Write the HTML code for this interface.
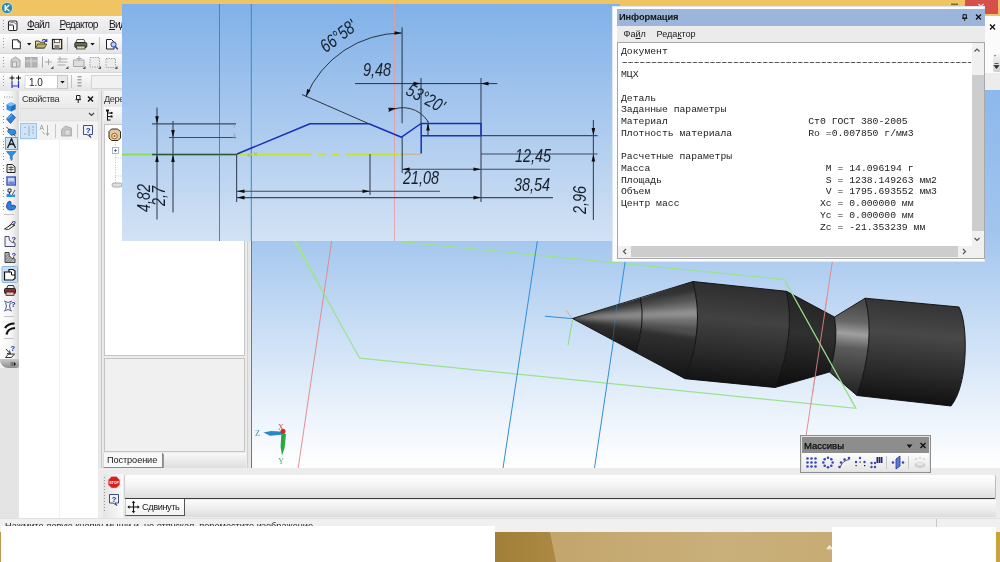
<!DOCTYPE html>
<html lang="ru">
<head>
<meta charset="utf-8">
<title>КОМПАС-3D</title>
<style>
html,body{margin:0;padding:0;}
body{width:1000px;height:562px;overflow:hidden;position:relative;background:#f0f0f0;font-family:"Liberation Sans","DejaVu Sans",sans-serif;font-size:9px;color:#1a1a1a;}
.a{position:absolute;}
.t{position:absolute;white-space:nowrap;line-height:1;}
#title{left:0;top:0;width:1000px;height:16px;background:#f0c462;}
#closebtn{left:965px;top:0;width:33px;height:14px;background:#d5504b;}
#menubar{left:0;top:16px;width:1000px;height:18px;background:linear-gradient(#f4f4f6,#e6e6ea);}
#tb1{left:0;top:34px;width:1000px;height:19px;background:linear-gradient(#fdfdfd,#e4e4e6);border-top:1px solid #fff;box-sizing:border-box;}
#tb2{left:0;top:53px;width:1000px;height:19px;background:linear-gradient(#fdfdfd,#e4e4e6);border-top:1px solid #d8d8d8;box-sizing:border-box;}
#tb3{left:0;top:72px;width:1000px;height:19px;background:linear-gradient(#fdfdfd,#e4e4e6);border-top:1px solid #d8d8d8;box-sizing:border-box;}
#ltool{left:0;top:91px;width:19px;height:277px;background:linear-gradient(90deg,#ffffff,#f4f4f4 60%,#d8d8d8);border-radius:0 0 0 6px;}
#ltoolcap{left:0;top:359px;width:19px;height:9px;background:linear-gradient(#c8c8c8,#8e8e8e);border-radius:0 0 3px 8px;}
#lbelow{left:0;top:368px;width:19px;height:150px;background:#e4e4e4;}
#props{left:19px;top:91px;width:79px;height:427px;background:#fff;}
#propshead{left:19px;top:91px;width:79px;height:17px;background:linear-gradient(#f6f6f6,#e9e9e9);}
#divider{left:98px;top:91px;width:6px;height:427px;background:#e9e9e9;}
#treepanel{left:104px;top:91px;width:147px;height:384px;background:#ececec;}
#view{left:252px;top:90px;width:748px;height:378px;background:linear-gradient(#8cb8ec 0%,#a2c5ee 38%,#bdd6f3 55%,#e3eefa 80%,#ffffff 100%);}
#overlay{left:122px;top:4px;width:498px;height:237px;background:linear-gradient(#80b1e8 0%,#a6c7ee 45%,#d3e2f4 100%);}
#info{left:612px;top:6px;width:373px;height:256px;background:#fafcfe;box-shadow:0 0 0 1px #dfe6ef inset;}
#infotitle{left:617px;top:9px;width:368px;height:17px;background:#9bb6da;}
#infomenu{left:617px;top:26px;width:368px;height:16px;background:#ebebeb;}
#infobox{left:617px;top:42px;width:368px;height:217px;background:#fff;border:1px solid #a8a8a8;box-sizing:border-box;}
.mono{font-family:"Liberation Mono","DejaVu Sans Mono",monospace;font-size:9.76px;line-height:11.72px;white-space:pre;color:#222;}
.dim{font-family:"Liberation Sans","DejaVu Sans",sans-serif;font-style:italic;font-size:18.5px;fill:#16202c;}
</style>
</head>
<body>
<div id="wrap" style="position:absolute;left:0;top:0;width:1000px;height:562px;will-change:transform;">
<!-- window chrome -->
<div class="a" id="title"></div>
<div class="a" id="closebtn"></div>
<div class="a" id="menubar"></div>
<div class="a" id="tb1"></div>
<div class="a" id="tb2"></div>
<div class="a" id="tb3"></div>
<div class="t" style="left:27px;top:20.2px;font-size:10.2px;letter-spacing:-0.72px;"><u>Ф</u>айл</div>
<div class="t" style="left:59.5px;top:20.2px;font-size:10.2px;letter-spacing:-0.72px;"><u>Р</u>едактор</div>
<div class="t" style="left:109px;top:20.2px;font-size:10.2px;letter-spacing:-0.72px;"><u>В</u>ид</div>


<!-- chrome icons -->
<svg class="a" style="left:0;top:0;" width="1000" height="562" viewBox="0 0 1000 562" fill="none">
<!-- app icon -->
<circle cx="7" cy="8" r="5.6" fill="#3388a6"/><circle cx="7" cy="8" r="5.6" stroke="#c8e4ee" stroke-width="0.8"/>
<path d="M5.200 5 V11 M9.300 5 L5.600 8.200 L9.500 11" stroke="#fff" stroke-width="1.3"/>
<!-- close glyph -->
<path d="M978.500 4 l5 5 m0 -5 l-5 5" stroke="#f6dada" stroke-width="1.2"/>
<path d="M951 3.500 h7 v1.600 h-7 z" fill="#7a6a3a"/>
<!-- menu doc icon -->
<rect x="8.500" y="21" width="8.500" height="9.500" rx="1.500" fill="#fafafa" stroke="#222" stroke-width="1.100"/>
<rect x="8.500" y="25" width="5" height="5.500" rx="1" fill="#fafafa" stroke="#222" stroke-width="1"/>
<path d="M10 23 q4 -2 6 1" stroke="#555" stroke-width="0.800"/>
<!-- grips -->
<g fill="#9a9a9a">
<rect x="3" y="20" width="1" height="1"/><rect x="3" y="23" width="1" height="1"/><rect x="3" y="26" width="1" height="1"/><rect x="3" y="29" width="1" height="1"/>
<rect x="3" y="38" width="1" height="1"/><rect x="3" y="41" width="1" height="1"/><rect x="3" y="44" width="1" height="1"/><rect x="3" y="47" width="1" height="1"/>
<rect x="3" y="57" width="1" height="1"/><rect x="3" y="60" width="1" height="1"/><rect x="3" y="63" width="1" height="1"/><rect x="3" y="66" width="1" height="1"/>
<rect x="3" y="76" width="1" height="1"/><rect x="3" y="79" width="1" height="1"/><rect x="3" y="82" width="1" height="1"/><rect x="3" y="85" width="1" height="1"/>
</g>
<!-- toolbar 1 -->
<path d="M12.500 39.800 h5.500 l2.300 2.300 v6.700 h-7.800 z" fill="#fff" stroke="#222" stroke-width="1"/><path d="M18 39.800 v2.300 h2.300" stroke="#222" stroke-width="0.800"/>
<path d="M27 43 h4.400 l-2.200 2.600 z" fill="#111"/>
<path d="M35.500 41 h3.500 l1 1.200 h4.500 v5.800 h-9 z" fill="#d8d08a" stroke="#3a3a20" stroke-width="0.900"/>
<path d="M35.500 48 l2.300 -4 h9 l-2.300 4 z" fill="#b8b470" stroke="#3a3a20" stroke-width="0.800"/>
<path d="M42 40.500 q2.500 -2.200 4.300 0.300 M46.800 39 v2.400 h-2.400" stroke="#2030b0" stroke-width="1.100"/>
<rect x="52.500" y="39.500" width="9.200" height="9.300" fill="#efe6d0" stroke="#1a1a1a" stroke-width="1.200"/><rect x="54.500" y="39.500" width="5" height="3.200" fill="#fff" stroke="#1a1a1a" stroke-width="0.600"/><rect x="54.500" y="45" width="5" height="3.800" fill="#888"/>
<path d="M67.500 37 v14 M99.500 37 v14" stroke="#c4c4c4" stroke-width="1"/>
<path d="M77 39.500 h7 l1 3 h-9 z" fill="#f4f4e8" stroke="#333" stroke-width="0.800"/>
<rect x="74.800" y="42.500" width="12" height="5" rx="1.200" fill="#6a6a5a" stroke="#222" stroke-width="0.900"/><rect x="76.500" y="46" width="8.500" height="3" fill="#d8d4a0" stroke="#222" stroke-width="0.700"/>
<path d="M90.300 43 h4.400 l-2.200 2.600 z" fill="#111"/>
<path d="M106.500 39.500 h5 l2.500 2.500 v7 h-7.500 z" fill="#fff" stroke="#222" stroke-width="1"/>
<circle cx="113.500" cy="44.500" r="2.600" fill="#b8d0f0" stroke="#2a3a9a" stroke-width="1"/><path d="M115.300 46.500 l2.500 2.800" stroke="#2a3a9a" stroke-width="1.400"/>
<!-- toolbar 2 (disabled) -->
<g stroke="#a8a8a8" stroke-width="1" fill="#cfcfcf">
<path d="M11 60 l4.500 -3 l4.500 3 v7 h-9 z"/><rect x="12.500" y="62" width="4" height="5" fill="#e4e4e4"/>
<rect x="25.500" y="57.500" width="11.500" height="9.500" fill="#b4b4b4"/><path d="M25.500 61 h11.500 M31 57.500 v9.500" stroke="#dcdcdc"/>
<path d="M42.500 56.500 v11 M45 62 h7 M48.500 59 v6" fill="none"/>
<path d="M57.500 59 h10 M57.500 62 h10 M57.500 65 h8 M60 56.500 v5" fill="none"/>
<path d="M73.500 60 h10.500 v6.500 h-10.500 z M79 56 v5 M76.500 58.500 h5" fill="#dedede"/>
<rect x="90" y="57.500" width="9.500" height="9.500" fill="#ececec" stroke-dasharray="1.500 1"/>
<rect x="106" y="58.500" width="9.500" height="9" fill="#ececec" stroke-dasharray="1.500 1"/>
</g>
<g fill="#555"><path d="M53.500 66 v3 h-3 z M68.500 66 v3 h-3 z M85.500 66 v3 h-3 z M101 66 v3 h-3 z M117.500 66 v3 h-3 z"/></g>
<!-- toolbar 3 -->
<path d="M12 75.500 v5 M9.500 78 h5 M18.500 75.500 v5 M16 78 h5" stroke="#111" stroke-width="1"/>
<path d="M12 81 v7 M18.500 81 v7 M12 86 h6.500" stroke="#2a3ac0" stroke-width="1.200"/>
<rect x="25" y="75.500" width="32.500" height="13" fill="#fff" stroke="#dadada" stroke-width="1"/>
<rect x="57.500" y="75.500" width="10" height="13" fill="#e9e9e9" stroke="#c6c6c6" stroke-width="1"/>
<path d="M60.300 81 h4.400 l-2.200 2.600 z" fill="#111"/>
<path d="M71.500 75 v13" stroke="#c4c4c4"/>
<g fill="#a4a4a4"><rect x="77.500" y="76" width="4" height="1.500"/><rect x="77.500" y="79" width="4" height="1.500"/><rect x="77.500" y="82" width="4" height="1.500"/><rect x="77.500" y="85" width="4" height="1.500"/></g>
<rect x="91.500" y="75.500" width="40" height="13" fill="#f1f1f1" stroke="#d4d4d4" stroke-width="1"/>
</svg>
<div class="t" style="left:29px;top:77.500px;font-size:10px;color:#222;">1.0</div>

<div class="a" style="left:985px;top:16px;width:15px;height:57px;background:#fbfbfb;"></div>
<div class="a" style="left:993px;top:54px;width:7px;height:18px;background:linear-gradient(#f4f4f4,#cfcfcf);border-radius:2px 0 0 2px;"></div>
<div class="a" style="left:985px;top:73px;width:15px;height:17px;background:#ececec;"></div>
<div class="t" style="left:994px;top:54px;font-size:6px;color:#333;">"</div>
<svg class="a" style="left:993px;top:60px;" width="7" height="10"><path d="M1.500 3.500 h4 M1 5.500 h5 l-2.500 3 z" stroke="#333" stroke-width="0.800" fill="#333"/></svg>
<!-- left column -->
<div class="a" id="ltool"></div>
<div class="a" id="ltoolcap"></div>
<div class="a" id="lbelow"></div>
<div class="a" id="props"></div>
<div class="a" id="propshead"></div>
<div class="t" style="left:22px;top:95px;font-size:9.2px;letter-spacing:-0.4px;color:#333;">Свойства</div>
<div class="a" id="divider"></div>
<div class="a" id="treepanel"></div>


<!-- tree panel details -->
<div class="a" style="left:104px;top:91px;width:147px;height:16px;background:linear-gradient(#f6f6f6,#e9e9e9);"></div>
<div class="t" style="left:104px;top:95px;font-size:9.2px;letter-spacing:-0.4px;color:#333;">Дерево</div>
<div class="a" style="left:104px;top:107px;width:147px;height:17px;background:linear-gradient(#fbfbfb,#e6e6e6);"></div>
<div class="a" style="left:104px;top:124px;width:141px;height:232px;background:#fff;border:1px solid #c4c4c4;box-sizing:border-box;"></div>
<div class="a" style="left:104px;top:358px;width:141px;height:94px;background:#f0f0f0;border:1px solid #c4c4c4;box-sizing:border-box;"></div>
<div class="a" style="left:246.500px;top:91px;width:1px;height:377px;background:#d0d0d0;"></div>
<div class="a" style="left:248px;top:91px;width:2px;height:377px;background:#e6e6e6;"></div>
<div class="a" style="left:250.500px;top:91px;width:1.500px;height:377px;background:#747474;"></div>
<div class="a" style="left:163px;top:453px;width:83px;height:15px;background:linear-gradient(#f8f8f8,#dedede);"></div>
<div class="a" style="left:103px;top:452.5px;width:59.5px;height:15px;background:#f8f8f8;border-right:1px solid #8a8a8a;border-bottom:1px solid #8a8a8a;border-left:1px solid #d8d8d8;box-sizing:border-box;box-shadow:1px 1px 0 #9a9a9a;"></div>
<div class="t" style="left:107px;top:456.3px;font-size:9.2px;letter-spacing:-0.1px;">Построение</div>
<div class="a" style="left:98px;top:91px;width:1px;height:427px;background:#e4e4e4;"></div>
<div class="a" style="left:101px;top:91px;width:1px;height:427px;background:#c8c8c8;"></div>

<!-- bottom bars -->
<div class="a" style="left:98px;top:468px;width:902px;height:50px;background:#ececec;"></div>
<div class="a" style="left:103px;top:474px;width:20px;height:44px;background:linear-gradient(90deg,#e4e4e4,#fafafa);"></div>
<div class="a" style="left:124px;top:475px;width:872px;height:24px;background:linear-gradient(#ffffff,#f4f4f4 45%,#dedede);border-bottom:1px solid #3a3a3a;border-left:1px solid #d0d0d0;border-right:1px solid #bcbcbc;box-sizing:border-box;border-radius:2px;"></div>
<div class="a" style="left:124px;top:500px;width:872px;height:17px;background:linear-gradient(#fbfbfb,#ededed 55%,#dcdcdc);"></div>
<div class="a" style="left:125px;top:499px;width:60px;height:17px;background:linear-gradient(#ffffff,#f2f2f2);border:1px solid #555;border-top:none;border-left:1px solid #c8c8c8;box-sizing:border-box;"></div>
<div class="t" style="left:142px;top:503px;font-size:9.2px;letter-spacing:-0.4px;">Сдвинуть</div>
<!-- status bar -->
<div class="a" style="left:0;top:518px;width:1000px;height:14px;background:#f0f0f0;border-top:1px solid #e0e0e0;box-sizing:border-box;"></div>
<div class="t" style="left:5px;top:522.3px;font-size:9.2px;color:#222;">Нажмите левую кнопку мыши и, не отпуская, переместите изображение</div>
<div class="a" style="left:936px;top:519px;width:1px;height:9px;background:#c8c8c8;"></div>
<!-- desktop strip -->
<div class="a" style="left:0;top:532px;width:1000px;height:30px;background:linear-gradient(90deg,#c3a66d 0%,#c3a66d 56%,#c9af7a 72%,#c4a86c 100%);"></div>
<svg class="a" style="left:495px;top:532px;" width="70" height="30"><defs><linearGradient id="dk" x1="0" x2="1" y1="0" y2="0"><stop offset="0" stop-color="#a27f38"/><stop offset="1" stop-color="#ab8944"/></linearGradient></defs><polygon points="0,0 55,0 61,30 0,30" fill="url(#dk)"/></svg>
<div class="a" style="left:0;top:532px;width:2px;height:30px;background:#b89a50;"></div>
<div class="a" style="left:1px;top:526px;width:494px;height:36px;background:#fff;"></div>
<div class="a" style="left:832px;top:527px;width:164px;height:35px;background:#fff;"></div>
<div class="a" style="left:996px;top:532px;width:4px;height:30px;background:#c9a23f;"></div>
<svg class="a" style="left:826px;top:544px;" width="8" height="8"><path d="M1 5 l2.500 -3 l2.500 3 M2.200 5 h2.600" stroke="#f4f0e6" stroke-width="1.200" fill="none"/></svg>


<!-- left toolbar + properties icons -->
<svg class="a" style="left:0;top:0;" width="260" height="562" viewBox="0 0 260 562" fill="none">
<g fill="#8a8a8a">
<rect x="4" y="96.500" width="1" height="1"/><rect x="6.500" y="96.500" width="1" height="1"/><rect x="9" y="96.500" width="1" height="1"/><rect x="11.500" y="96.500" width="1" height="1"/>
</g>
<g fill="#7a86c0">
<rect x="3" y="103" width="1" height="1"/><rect x="3" y="106" width="1" height="1"/><rect x="3" y="109" width="1" height="1"/>
<rect x="3" y="116" width="1" height="1"/><rect x="3" y="119" width="1" height="1"/><rect x="3" y="122" width="1" height="1"/>
<rect x="3" y="128" width="1" height="1"/><rect x="3" y="131" width="1" height="1"/><rect x="3" y="134" width="1" height="1"/>
<rect x="3" y="141" width="1" height="1"/><rect x="3" y="144" width="1" height="1"/><rect x="3" y="147" width="1" height="1"/>
<rect x="3" y="153" width="1" height="1"/><rect x="3" y="156" width="1" height="1"/><rect x="3" y="159" width="1" height="1"/>
<rect x="3" y="165" width="1" height="1"/><rect x="3" y="168" width="1" height="1"/><rect x="3" y="171" width="1" height="1"/>
<rect x="3" y="178" width="1" height="1"/><rect x="3" y="181" width="1" height="1"/><rect x="3" y="184" width="1" height="1"/>
<rect x="3" y="190" width="1" height="1"/><rect x="3" y="193" width="1" height="1"/><rect x="3" y="196" width="1" height="1"/>
<rect x="3" y="203" width="1" height="1"/><rect x="3" y="206" width="1" height="1"/><rect x="3" y="209" width="1" height="1"/>
</g>
<!-- cube -->
<path d="M6.500 104.500 l4.500 -2.300 l4.500 2 v5 l-4.500 2.300 l-4.500 -2 z" fill="#2f8fe6"/><path d="M6.500 104.500 l4.500 2 l4.500 -2.300 l-4.500 -2 z" fill="#7cc0f6"/><path d="M11 106.500 v5 l4.500 -2.300 v-5 z" fill="#1d6cc8"/>
<!-- sheet -->
<path d="M6.500 119 l5 -5.500 l4 4 l-5 6 z" fill="#2f7fde" stroke="#164a9a" stroke-width="0.700"/><path d="M8 118.500 l4 -4" stroke="#9cd0fa" stroke-width="1"/>
<!-- blue tool 3 -->
<path d="M9 129 l6 1 l1 3.500 l-4.500 2 l-4 -4 z" fill="#2f8fe6" stroke="#174a9a" stroke-width="0.700"/><path d="M6.500 127 l3 3 M13 134 l2.500 2" stroke="#222" stroke-width="0.900"/>
<!-- selected geometry -->
<rect x="5.500" y="137.500" width="12" height="12" fill="#cfe3f6" stroke="#6ea4d6" stroke-width="1"/>
<path d="M7.500 148 l4 -9 l4 9 M9 145 q2.500 -2 5 0" stroke="#1c1c1c" stroke-width="1.300"/><circle cx="11.500" cy="139.500" r="1" fill="#1c1c1c"/>
<!-- funnel -->
<path d="M6.500 151.500 h9.500 l-3.800 4.500 v4 l-1.900 -1.200 v-2.800 z" fill="#2f8fe6" stroke="#1c5db4" stroke-width="0.600"/><circle cx="11.300" cy="160" r="0.800" fill="#b06a20"/>
<!-- doc -->
<path d="M7 164.500 h5.500 l2.500 2.500 v5.500 h-8 z" fill="#e8e8e8" stroke="#222" stroke-width="1"/><path d="M8.500 167.500 h5 M8.500 169.500 h5 M11 166 v5.500" stroke="#444" stroke-width="0.800"/>
<!-- blue save -->
<rect x="7" y="177" width="8.300" height="8" fill="#c8d4f4" stroke="#3a54c0" stroke-width="1.400"/><rect x="8.500" y="181.500" width="5.500" height="3" fill="#6e86dc"/>
<!-- measure -->
<path d="M8 189 h3 v3 h-3 z M9.500 192 v3" stroke="#222" stroke-width="0.900"/><path d="M6.500 194.500 q2 -1.500 4 0 t4.500 -0.500 v3 h-8.500 z" fill="#2f8fe6"/><path d="M12 195 l3 -5" stroke="#444" stroke-width="0.900"/>
<!-- blue shape -->
<path d="M8 202 q2 -1.500 3 0 v3.500 q2.500 -1 4.500 0.500 q0.500 3.500 -3.500 4 q-5 0.500 -5.500 -3 q0 -3 1.500 -5 z" fill="#2f7fde" stroke="#153f90" stroke-width="0.800"/>
<path d="M4 214.500 h10 M4 316.500 h10 M4 338.500 h10" stroke="#c4c4c4" stroke-width="1"/>
<!-- sketch ? -->
<path d="M4.500 229 l7 -4.500 l3.500 0.500 l-6.500 4.500 z" fill="#f4f4f4" stroke="#222" stroke-width="0.900"/><path d="M8 227 l5 -5" stroke="#222" stroke-width="0.900"/>
<!-- L ? -->
<path d="M5 236.500 h4 q-0.500 6 6 6.500 v3.500 h-10 z" fill="#f2f2f8" stroke="#3a3a5a" stroke-width="0.900"/>
<!-- hatched L ? -->
<path d="M5 252.500 h4 q-0.500 6 6 6.500 v3.500 h-10 z" fill="#b8b8b8" stroke="#333" stroke-width="0.900"/><path d="M5.500 257 l3 -3 M5.500 260 l4 -4 M6.500 262 l4 -4 M9.500 262 l3 -3" stroke="#444" stroke-width="0.600"/>
<!-- selected 3D L -->
<rect x="2" y="266.500" width="15.500" height="16" rx="1" fill="#c6dff5" stroke="#8cb8de" stroke-width="1"/>
<path d="M4.500 272 h4.500 v-2.500 h4 l2 1.500 v7.500 l-2 1.500 h-8.500 z" fill="#fff" stroke="#111" stroke-width="1.200"/><path d="M9 272 h2.500 v3 h3.500" stroke="#111" stroke-width="1"/>
<!-- red printer -->
<path d="M6.500 288.500 l1.500 -3 h5.500 l1 3" fill="#eee" stroke="#222" stroke-width="0.900"/><rect x="4.500" y="288.500" width="11" height="5" rx="1" fill="#8a3030" stroke="#1a1a1a" stroke-width="0.900"/><rect x="6" y="292" width="8" height="3.500" fill="#e4b4b4" stroke="#1a1a1a" stroke-width="0.700"/>
<!-- icon ? -->
<path d="M4 301 q4 3 8 0 M4 311 q4 -3 8 0 M5.500 302.500 q2 3.500 0 7 M10.500 302.500 q-2 3.500 0 7" stroke="#3a4a7a" stroke-width="0.900"/>
<!-- black arcs -->
<path d="M5 328 q3 -4.500 9.500 -4.500" stroke="#111" stroke-width="2.200"/><path d="M6.500 334.500 q1 -6 8.500 -6.500" stroke="#111" stroke-width="2.200"/>
<!-- arrow ? -->
<path d="M6 349 l4.500 5 M10.500 354 l-1 -3.500 M10.500 354 l-3.500 -0.500 M5.500 357.500 l3 -3.500 h6 l-3 3.500 z" stroke="#222" stroke-width="0.900"/>
<g font-family="Liberation Sans, DejaVu Sans, sans-serif" font-weight="bold" font-size="7.500" fill="#1c2a9c"><text x="11.500" y="225.500">?</text><text x="11.500" y="241.500">?</text><text x="11.500" y="257.500">?</text><text x="11" y="306.500">?</text><text x="10.500" y="350.500">?</text></g>
<path d="M11 362 v4 M12.500 362 v4" stroke="#555" stroke-width="0.800"/><path d="M13.800 361.800 l2.200 2.200 l-2.200 2.200 z" fill="#111"/>
<!-- properties header icons -->
<path d="M76.500 95.500 h3.500 v4 h-3.500 z M75.500 99.700 h5.500 M78.200 100 v3" stroke="#222" stroke-width="1"/>
<path d="M88 96.500 l5 5 m0 -5 l-5 5" stroke="#111" stroke-width="1.400"/>
<rect x="20" y="108.500" width="77.500" height="12.500" fill="#e9e9e9" stroke="#dcdcdc" stroke-width="1"/>
<path d="M89 113 l2.500 2.500 l2.500 -2.500" stroke="#444" stroke-width="1.200"/>
<rect x="20" y="122" width="78" height="18" fill="#f3f3f3"/>
<rect x="20.500" y="123.500" width="16" height="15" fill="#cfe3f6" stroke="#9cc4e8" stroke-width="1"/>
<path d="M25 127 v1 M25 133.500 v1 M24.500 127.500 h1 M24.500 134 h1 M29 126 v10 M32 127 h2 M32 130 h2 M32 133 h2" stroke="#8aa8cc" stroke-width="0.900"/>
<g font-family="Liberation Sans, DejaVu Sans, sans-serif" font-size="6.500" fill="#8c8c8c"><text x="39.500" y="130">A</text></g>
<path d="M42 131.500 l1.500 1.500 l1 1.500 M47.500 125 v10 M46 133 l1.500 2.500 l1.500 -2.500" stroke="#9a9a9a" stroke-width="0.800"/>
<path d="M55.500 124 v14 M77.500 124 v14" stroke="#c8c8c8" stroke-width="1"/>
<path d="M61.500 129.500 l4 -3.500 l6 2 v8 h-10 z" fill="#c4c4c4" stroke="#a8a8a8" stroke-width="0.800"/><rect x="65" y="130" width="5" height="5" fill="#dedede" stroke="#aaa" stroke-width="0.600"/>
<path d="M83.500 125.500 h9 v9 h-3.500 l2 3 l-4 -3 h-3.500 z" fill="#eef2fa" stroke="#2a3a6a" stroke-width="0.900"/>
<g font-family="Liberation Sans, DejaVu Sans, sans-serif" font-weight="bold" font-size="8" fill="#1c2a9c"><text x="85.700" y="133.300">?</text></g>
<path d="M59.500 140 v378" stroke="#f2f2f2" stroke-width="1"/>
<!-- tree header icon -->
<path d="M107.500 111 v9.500 M107.500 113 h3 M107.500 116.500 h3 M107.500 120 h3" stroke="#111" stroke-width="1"/><rect x="110.500" y="112" width="2" height="2" fill="#111"/><rect x="110.500" y="115.500" width="2" height="2" fill="#111"/><rect x="106" y="109.500" width="3" height="2" fill="#111"/>
<!-- tree root -->
<path d="M109 131.500 l2.500 -2.500 h6 l3 2.500 v6.500 l-2.500 2.500 h-6.500 l-2.500 -2.500 z" fill="#e8c89a" stroke="#3a2a1a" stroke-width="1"/><circle cx="114.500" cy="136" r="2.800" fill="#f4e2c4" stroke="#8a5a2a" stroke-width="0.900"/><circle cx="114.500" cy="136" r="1" fill="#c03a2a"/>
<path d="M115.500 142 v44" stroke="#b0b0b0" stroke-width="0.800" stroke-dasharray="1 1.500"/>
<path d="M115.500 158 h6 M115.500 176 h6" stroke="#b0b0b0" stroke-width="0.800" stroke-dasharray="1 1.500"/>
<rect x="112.500" y="147.500" width="6" height="6" fill="#fff" stroke="#9aa6c0" stroke-width="0.800"/><path d="M114 150.500 h3 M115.500 149 v3" stroke="#4a5a8a" stroke-width="0.800"/>
<rect x="112" y="183" width="10" height="4" rx="2" fill="#e0e0e0" stroke="#9a9a9a" stroke-width="0.800"/>
</svg>

<!-- 3D viewport -->
<div class="a" id="view"></div>


<svg class="a" style="left:0;top:0;" width="1000" height="562" viewBox="0 0 1000 562">
<defs>
<clipPath id="vclip"><rect x="252" y="90" width="748" height="378"/></clipPath>
<linearGradient id="gCone1" gradientUnits="userSpaceOnUse" x1="640" y1="296" x2="633" y2="352">
<stop offset="0" stop-color="#2a2a2a"/><stop offset="0.4" stop-color="#3a3a3a"/><stop offset="1" stop-color="#161616"/></linearGradient>
<linearGradient id="gCone2" gradientUnits="userSpaceOnUse" x1="693" y1="281" x2="684" y2="379">
<stop offset="0" stop-color="#2c2c2c"/><stop offset="0.35" stop-color="#3e3e3e"/><stop offset="1" stop-color="#141414"/></linearGradient>
<clipPath id="coneclip"><path d="M572.5 318.5 L693 281.5 Q705 328 685 378.7 Z"/></clipPath>
<filter id="blur2" x="-20%" y="-50%" width="140%" height="200%"><feGaussianBlur stdDeviation="2.2"/></filter>
<linearGradient id="gCyl1" gradientUnits="userSpaceOnUse" x1="740" y1="286" x2="731" y2="384">
<stop offset="0" stop-color="#2e2e2e"/><stop offset="0.35" stop-color="#424242"/><stop offset="0.7" stop-color="#2a2a2a"/><stop offset="1" stop-color="#121212"/></linearGradient>
<linearGradient id="gTaper" gradientUnits="userSpaceOnUse" x1="810" y1="300" x2="802" y2="384">
<stop offset="0" stop-color="#262626"/><stop offset="0.4" stop-color="#303030"/><stop offset="1" stop-color="#101010"/></linearGradient>
<linearGradient id="gCone3" gradientUnits="userSpaceOnUse" x1="852" y1="302" x2="844" y2="390">
<stop offset="0" stop-color="#484848"/><stop offset="0.22" stop-color="#666666"/><stop offset="0.36" stop-color="#a0a0a0"/><stop offset="0.52" stop-color="#5c5c5c"/><stop offset="1" stop-color="#262626"/></linearGradient>
<linearGradient id="gCyl2" gradientUnits="userSpaceOnUse" x1="912" y1="302" x2="903" y2="402">
<stop offset="0" stop-color="#343434"/><stop offset="0.32" stop-color="#484848"/><stop offset="0.7" stop-color="#2a2a2a"/><stop offset="1" stop-color="#111111"/></linearGradient>
</defs>
<g clip-path="url(#vclip)" fill="none" stroke-width="1">
<!-- plane outlines -->
<path d="M273.800 204 L359.700 358.200 L855.800 408.300 L784 279.300 L252 227.200" stroke="#9be28e" stroke-width="1.3"/>
<path d="M537.5 240 L503 468" stroke="#2e8fd6"/>
<path d="M626 256 L594.5 468" stroke="#2e8fd6"/>
<path d="M545 316.200 L572 318.600" stroke="#2e8fd6"/>
<path d="M572.5 320 L568 345" stroke="#8edc7e"/>
<path d="M333.300 230 L298.200 468" stroke="#e08484" stroke-width="0.9"/>
<path d="M292.600 240 L296.200 240 L340 322 Z" fill="#a6e09a" stroke="none"/>
<path d="M833.500 254 L806.200 435" stroke="#e08484" stroke-width="0.9"/>
<path d="M566 310 L572 318" stroke="#e8a08a"/>
<!-- 3D part -->
<g stroke="none">
<path d="M572.5 318.5 L640.5 298.2 Q645.5 323 635.8 352.3 Z" fill="url(#gCone1)"/>
<path d="M640.5 298.2 L693 281.5 Q705 328 685 378.7 L635.8 352.3 Q645.5 323 640.5 298.2 Z" fill="url(#gCone2)"/>
<g clip-path="url(#coneclip)"><g filter="url(#blur2)">
<path d="M566 318 L700 292 L701 337 Z" fill="#505050"/>
<path d="M566 318 L700 301 L701 326 Z" fill="#6e6e6e"/>
<path d="M566 318 L700 308.500 L701 317.500 Z" fill="#929292"/>
</g></g>
<path d="M693 281.5 L786.5 291.3 Q796 336 775 387.5 L685 378.7 Q705 328 693 281.5 Z" fill="url(#gCyl1)"/>
<path d="M786.5 291.3 L834.5 317 Q839 342 829.5 372 L775 387.5 Q796 336 786.5 291.3 Z" fill="url(#gTaper)"/>
<path d="M834.5 317 L865.2 298.2 Q876 340 857 395.5 L829.5 372 Q839 342 834.5 317 Z" fill="url(#gCone3)"/>
<path d="M865.2 298.2 L959 307 C968 322 969 384 951 406 L857 395.5 Q876 340 865.2 298.2 Z" fill="url(#gCyl2)"/>
</g>
<g stroke="#0a0a0a" stroke-width="0.9">
<path d="M572.5 318.5 L693 281.5 L786.5 291.3 L834.5 317 L865.2 298.2 L959 307 C968 322 969 384 951 406 L857 395.5 L829.5 372 L775 387.5 L685 378.7 Z"/>
<path d="M640.5 298.2 Q645.5 323 635.8 352.3"/>
<path d="M693 281.5 Q705 328 685 378.7"/>
<path d="M786.5 291.3 Q796 336 775 387.5"/>
<path d="M834.5 317 Q839 342 829.5 372"/>
<path d="M865.2 298.2 Q876 340 857 395.5"/>
</g>
<!-- plane edges drawn over the part -->
<path d="M787 284.500 L855.800 408.300" stroke="#9be28e" stroke-width="1.3"/>
<path d="M827 298 L812.500 394" stroke="#e88a8a" stroke-opacity="0.85"/>
<path d="M617 304 L612.500 342" stroke="#2e8fd6" stroke-opacity="0.4"/>
<!-- axis triad -->
<path d="M284.500 431.800 L271 431 L263.500 432.600 L270 435.800 L284.500 434.600 Z" fill="#2a86c4" stroke="none"/>
<path d="M281.300 434 L286 434 L284.600 448 L282 455.500 L280.600 447 Z" fill="#2aa83e" stroke="none"/>
<circle cx="283" cy="431.200" r="2.500" fill="#cc2a2a" stroke="none"/>
</g>
<text x="255" y="435.500" font-family="Liberation Serif, DejaVu Serif, serif" font-size="8.500" fill="#4a9ab8">Z</text>
<text x="278" y="430" font-family="Liberation Serif, DejaVu Serif, serif" font-size="8" fill="#d04a4a">X</text>
<text x="278.300" y="464" font-family="Liberation Serif, DejaVu Serif, serif" font-size="8" fill="#4ab070">Y</text>
</svg>

<!-- sketch overlay -->
<div class="a" id="overlay"></div>


<svg class="a" style="left:0;top:0;" width="1000" height="562" viewBox="0 0 1000 562">
<defs>
<clipPath id="oclip"><rect x="122" y="4" width="490" height="237"/></clipPath>
</defs>
<g clip-path="url(#oclip)" fill="none">
<!-- construction lines -->
<path d="M219.5 4 V241 M251.3 4 V241" stroke="#2b8fd0" stroke-width="1"/>
<path d="M394.5 4 V241" stroke="#e89a9a" stroke-width="1" stroke-opacity="0.8"/>
<!-- axis -->
<path d="M122 154.5 H237" stroke="#8ee04a" stroke-width="2"/>
<path d="M237 154.5 H312 M318 154.5 H326 M332 154.5 H340 M346 154.5 H401" stroke="#c4e22e" stroke-width="1.6"/>
<path d="M401 154.2 H421" stroke="#d8a070" stroke-width="0.8"/>
<path d="M152 154.5 H237" stroke="#2c5a34" stroke-width="1.4"/>
<!-- extension + dimension lines -->
<g stroke="#3e4a5e" stroke-width="1.15">
<path d="M157 107.5 V219.5 M173 121 V212.5"/>
<path d="M152 123.8 H236 M169 137.5 H236"/>
<path d="M236.6 154 V202"/>
<path d="M237 191.2 H440 M237 197.6 H553"/>
<path d="M370 154 V195"/>
<path d="M402.2 137 V173"/>
<path d="M402 169.2 H550"/>
<path d="M481 78 V202"/>
<path d="M481 135.6 H597.6 M481 154 H597.6"/>
<path d="M593.4 120 V220"/>
</g>
<g stroke="#1c2430" stroke-width="0.9">
<path d="M355 83.6 H497.4"/>
<path d="M402.1 27.3 V123.3"/>
<path d="M421 78 V123"/>
<path d="M302 94.5 L369 123.8"/>
<path d="M401.5 33 A104 104 0 0 0 305.9 96.7"/>
<path d="M388.5 111.5 A29.5 29.5 0 0 1 428 121.5"/>
<path d="M428 121 V136"/>
</g>
<!-- arrows -->
<g fill="#0c0c0c" stroke="none">
<path d="M0 0 L-7.5 -1.8 L-7.5 1.8 Z" transform="translate(157 123.8) rotate(90)"/>
<path d="M0 0 L-7.5 -1.8 L-7.5 1.8 Z" transform="translate(157 154.5) rotate(-90)"/>
<path d="M0 0 L-7.5 -1.8 L-7.5 1.8 Z" transform="translate(173 137.5) rotate(90)"/>
<path d="M0 0 L-7.5 -1.8 L-7.5 1.8 Z" transform="translate(173 154.5) rotate(-90)"/>
<path d="M0 0 L-7.5 -1.8 L-7.5 1.8 Z" transform="translate(237 191.2) rotate(180)"/>
<path d="M0 0 L-7.5 -1.8 L-7.5 1.8 Z" transform="translate(370 191.2)"/>
<path d="M0 0 L-7.5 -1.8 L-7.5 1.8 Z" transform="translate(237 197.6) rotate(180)"/>
<path d="M0 0 L-7.5 -1.8 L-7.5 1.8 Z" transform="translate(481 197.6)"/>
<path d="M0 0 L-7.5 -1.8 L-7.5 1.8 Z" transform="translate(402.2 169.2) rotate(180)"/>
<path d="M0 0 L-7.5 -1.8 L-7.5 1.8 Z" transform="translate(481 169.2)"/>
<path d="M0 0 L-7.5 -1.8 L-7.5 1.8 Z" transform="translate(593.4 135.6) rotate(90)"/>
<path d="M0 0 L-7.5 -1.8 L-7.5 1.8 Z" transform="translate(593.4 154) rotate(-90)"/>
<path d="M0 0 L-7.5 -1.8 L-7.5 1.8 Z" transform="translate(421 83.6)"/>
<path d="M0 0 L-7.5 -1.8 L-7.5 1.8 Z" transform="translate(481 83.6) rotate(180)"/>
<path d="M0 0 L-7.5 -1.8 L-7.5 1.8 Z" transform="translate(402 33)"/>
<path d="M0 0 L-7.5 -1.8 L-7.5 1.8 Z" transform="translate(305.9 96.7) rotate(113)"/>
<path d="M0 0 L-7.5 -1.8 L-7.5 1.8 Z" transform="translate(396 108)  rotate(-12)"/>
<path d="M0 0 L-7.5 -1.8 L-7.5 1.8 Z" transform="translate(428 123) rotate(-90)"/>
</g>
<!-- profile -->
<path d="M237 154 L310 123.8 H369 L401.5 137.2 L421 123.5 H481 V135.8 H421.2 V153.5 M421.2 123.5 V135.8" stroke="#1631b8" stroke-width="1.5" stroke-linejoin="round"/>
<!-- small markers -->
<path d="M233 138 l1.5 -5 l1.5 5 z M235 124 l-1 4" stroke="#8ea0b4" stroke-width="0.6"/>
<path d="M248 156.5 l4 -1.2 l-4 -1.2 z M254 152 l3 4 M257 152 l-3 4" stroke="#a0a8a0" stroke-width="0.6"/>
<!-- dimension texts -->
<g class="dim">
<text transform="translate(339 37) rotate(-37) scale(0.78 1)" text-anchor="middle" y="5">66°58'</text>
<text transform="translate(377 76) scale(0.78 1)" text-anchor="middle">9,48</text>
<text transform="translate(425 99) rotate(28) scale(0.78 1)" text-anchor="middle" y="5">53°20'</text>
<text transform="translate(533 162) scale(0.78 1)" text-anchor="middle">12,45</text>
<text transform="translate(421 184) scale(0.78 1)" text-anchor="middle">21,08</text>
<text transform="translate(532 191) scale(0.78 1)" text-anchor="middle">38,54</text>
<text transform="translate(586 200) rotate(-90) scale(0.78 1)" text-anchor="middle">2,96</text>
<text transform="translate(149.5 198) rotate(-90) scale(0.78 1)" text-anchor="middle">4,82</text>
<text transform="translate(165 196) rotate(-90) scale(0.78 1)" text-anchor="middle">2,7</text>
</g>
</g>
</svg>

<!-- info panel -->
<div class="a" id="info"></div>
<div class="a" id="infotitle"></div>
<div class="a" id="infomenu"></div>
<div class="a" id="infobox"></div>


<div class="t" style="left:619px;top:13px;font-size:9.3px;font-weight:bold;letter-spacing:-0.1px;color:#111;">Информация</div>
<div class="t" style="left:623.5px;top:29.5px;font-size:9.1px;">Фа<u>й</u>л</div>
<div class="t" style="left:656.5px;top:29.5px;font-size:9.1px;">Реда<u>к</u>тор</div>
<div class="a" style="left:621px;top:44.6px;width:350px;height:201px;overflow:hidden;">
<div class="a mono" style="left:0;top:1.20px;">Документ</div>
<div class="a mono" style="left:0;top:12.10px;text-shadow:1.8px 0 0 #333;">----------------------------------------------------------------------</div>
<div class="a mono" style="left:0;top:24.64px;">МЦХ</div>
<div class="a mono" style="left:0;top:48.08px;">Деталь</div>
<div class="a mono" style="left:0;top:59.80px;">Заданные параметры</div>
<div class="a mono" style="left:0;top:71.52px;">Материал                        Ст0 ГОСТ 380-2005</div>
<div class="a mono" style="left:0;top:83.24px;">Плотность материала             Ro =0.007850 г/мм3</div>
<div class="a mono" style="left:0;top:106.68px;">Расчетные параметры</div>
<div class="a mono" style="left:0;top:118.40px;">Масса                              M = 14.096194 г</div>
<div class="a mono" style="left:0;top:130.12px;">Площадь                            S = 1238.149263 мм2</div>
<div class="a mono" style="left:0;top:141.84px;">Объем                              V = 1795.693552 мм3</div>
<div class="a mono" style="left:0;top:153.56px;">Центр масс                        Xc = 0.000000 мм</div>
<div class="a mono" style="left:0;top:165.28px;">                                  Yc = 0.000000 мм</div>
<div class="a mono" style="left:0;top:177.00px;">                                  Zc = -21.353239 мм</div>
</div>
<!-- scrollbars -->
<div class="a" style="left:972px;top:43px;width:12px;height:203px;background:#f0f0f0;"></div>
<div class="a" style="left:972px;top:75px;width:12px;height:156px;background:#cdcdcd;"></div>
<div class="a" style="left:618px;top:246px;width:354px;height:12px;background:#f0f0f0;"></div>
<div class="a" style="left:631px;top:246px;width:327px;height:11px;background:#cdcdcd;"></div>
<div class="a" style="left:972px;top:246px;width:12px;height:12px;background:#f0f0f0;"></div>
<svg class="a" style="left:612px;top:0;" width="388" height="262" viewBox="612 0 388 262" fill="none" stroke="#555" stroke-width="1.2">
<path d="M974.5 51.5 l2.5 -2.5 l2.5 2.5"/>
<path d="M974.5 238 l2.5 2.5 l2.5 -2.5"/>
<path d="M626 249 l-2.5 2.5 l2.5 2.5"/>
<path d="M963 249 l2.500 2.5 l-2.5 2.5"/>
<g stroke="#111" stroke-width="1.3"><path d="M976 14.500 l5 5 m0 -5 l-5 5"/><path d="M990 24.500 l5 5 m0 -5 l-5 5"/>
<path d="M963 14.700 h3.400 v3.400 h-3.400 z M962 18.300 h5.400 M964.700 18.500 v2.400" stroke-width="1"/></g>
</svg>


<!-- Массивы floating toolbar -->
<div class="a" style="left:800px;top:435px;width:131px;height:38px;background:#f2f2f2;border:1px solid #8e8e8e;box-sizing:border-box;box-shadow:0 0 0 1px #e2e2e2 inset;"></div>
<div class="a" style="left:802px;top:437px;width:127px;height:16px;background:#8d8d8d;"></div>
<div class="a" style="left:802px;top:453px;width:127px;height:18px;background:linear-gradient(#fcfcfc,#e6e6e6);"></div>
<div class="t" style="left:804px;top:441px;font-size:9.5px;color:#0a0a0a;-webkit-text-stroke:0.25px #0a0a0a;">Массивы</div>
<svg class="a" style="left:800px;top:435px;" width="131" height="38" viewBox="800 435 131 38" fill="none">
<path d="M906.500 444.500 h6 l-3 3.500 z" fill="#111"/>
<path d="M920.500 443 l5 5 m0 -5 l-5 5" stroke="#111" stroke-width="1.400"/>
<g fill="#3a48b4">
<circle cx="807.500" cy="458.500" r="1.300"/><circle cx="811.500" cy="458.500" r="1.300"/><circle cx="815.500" cy="458.500" r="1.300"/>
<circle cx="807.500" cy="462.500" r="1.300"/><circle cx="811.500" cy="462.500" r="1.300"/><circle cx="815.500" cy="462.500" r="1.300"/>
<circle cx="807.500" cy="466.500" r="1.300"/><circle cx="811.500" cy="466.500" r="1.300"/><circle cx="815.500" cy="466.500" r="1.300"/>
<circle cx="828" cy="457.800" r="1.300"/><circle cx="831.300" cy="459.200" r="1.300"/><circle cx="832.700" cy="462.500" r="1.300"/><circle cx="831.300" cy="465.800" r="1.300"/><circle cx="828" cy="467.200" r="1.300"/><circle cx="824.700" cy="465.800" r="1.300"/><circle cx="823.300" cy="462.500" r="1.300"/><circle cx="824.700" cy="459.200" r="1.300"/>
<circle cx="839.500" cy="467" r="1.300"/><circle cx="841" cy="462.500" r="1.300"/><circle cx="844.500" cy="459.500" r="1.300"/><circle cx="849" cy="458" r="1.300"/>
<circle cx="860" cy="458" r="1.200"/><circle cx="856" cy="462" r="1.200"/><circle cx="864.500" cy="462" r="1.200"/>
<circle cx="871.500" cy="463" r="1.200"/><circle cx="875" cy="463" r="1.200"/><circle cx="871.500" cy="467" r="1.200"/><circle cx="875" cy="467" r="1.200"/>
<circle cx="893" cy="462.500" r="1.300"/><circle cx="903" cy="462.500" r="1.300"/>
</g>
<path d="M840.500 466.500 q2 -6 9 -7" stroke="#333" stroke-width="0.800"/>
<g fill="#111"><rect x="855.500" y="465" width="1.200" height="1.200"/><rect x="864" y="465" width="1.200" height="1.200"/><rect x="859.500" y="461.500" width="1.200" height="1.200"/></g>
<rect x="876.500" y="457" width="6" height="6" fill="#2a2a6a"/><path d="M878.500 457 v6 M880.500 457 v6" stroke="#c8c8e8" stroke-width="0.600"/>
<path d="M886.500 456 v13 M908.500 456 v13" stroke="#c6c6c6" stroke-width="1"/>
<path d="M896 459 l4 -3 v10 l-4 3 z" fill="#5a78d8" stroke="#26348e" stroke-width="0.800"/>
<g fill="#cfcfcf"><circle cx="916" cy="459" r="1"/><circle cx="920" cy="458" r="1"/><circle cx="924" cy="459" r="1"/><ellipse cx="920" cy="465" rx="5.500" ry="3"/></g><ellipse cx="920" cy="464" rx="3.500" ry="1.500" fill="#e8e8e8"/>
</svg>

<!-- bottom-left icons -->
<svg class="a" style="left:100px;top:470px;" width="100" height="50" viewBox="100 470 100 50" fill="none">
<g fill="#9a9a9a"><rect x="104" y="477" width="1" height="1"/><rect x="104" y="480" width="1" height="1"/><rect x="104" y="483" width="1" height="1"/><rect x="104" y="486" width="1" height="1"/><rect x="104" y="489" width="1" height="1"/><rect x="104" y="492" width="1" height="1"/><rect x="104" y="495" width="1" height="1"/><rect x="104" y="498" width="1" height="1"/><rect x="104" y="501" width="1" height="1"/><rect x="104" y="504" width="1" height="1"/><rect x="104" y="507" width="1" height="1"/><rect x="104" y="510" width="1" height="1"/></g>
<path d="M111.600 476.500 h4.800 l3.400 3.400 v4.800 l-3.400 3.400 h-4.800 l-3.400 -3.400 v-4.800 z" fill="#d8201c" stroke="#f0b0b0" stroke-width="0.600"/>
<text x="114" y="484" font-family="Liberation Sans, DejaVu Sans, sans-serif" font-weight="bold" font-size="3.600" fill="#fff" text-anchor="middle">STOP</text>
<path d="M109.500 494.500 h9 v8.500 h-3.500 l2 2.500 l-4 -2.500 h-3.500 z" fill="#eef2fa" stroke="#2a3a6a" stroke-width="0.900"/>
<text x="111.700" y="501.800" font-family="Liberation Sans, DejaVu Sans, sans-serif" font-weight="bold" font-size="7.500" fill="#1c2a9c">?</text>
<path d="M133.500 502 v10 M128.500 507 h10" stroke="#111" stroke-width="1.100"/><path d="M133.500 500.800 l-1.800 2.200 h3.600 z M133.500 513.200 l-1.800 -2.200 h3.600 z M127.300 507 l2.200 -1.800 v3.600 z M139.700 507 l-2.200 -1.800 v3.600 z" fill="#111"/>
</svg>

</div>
</body>
</html>
